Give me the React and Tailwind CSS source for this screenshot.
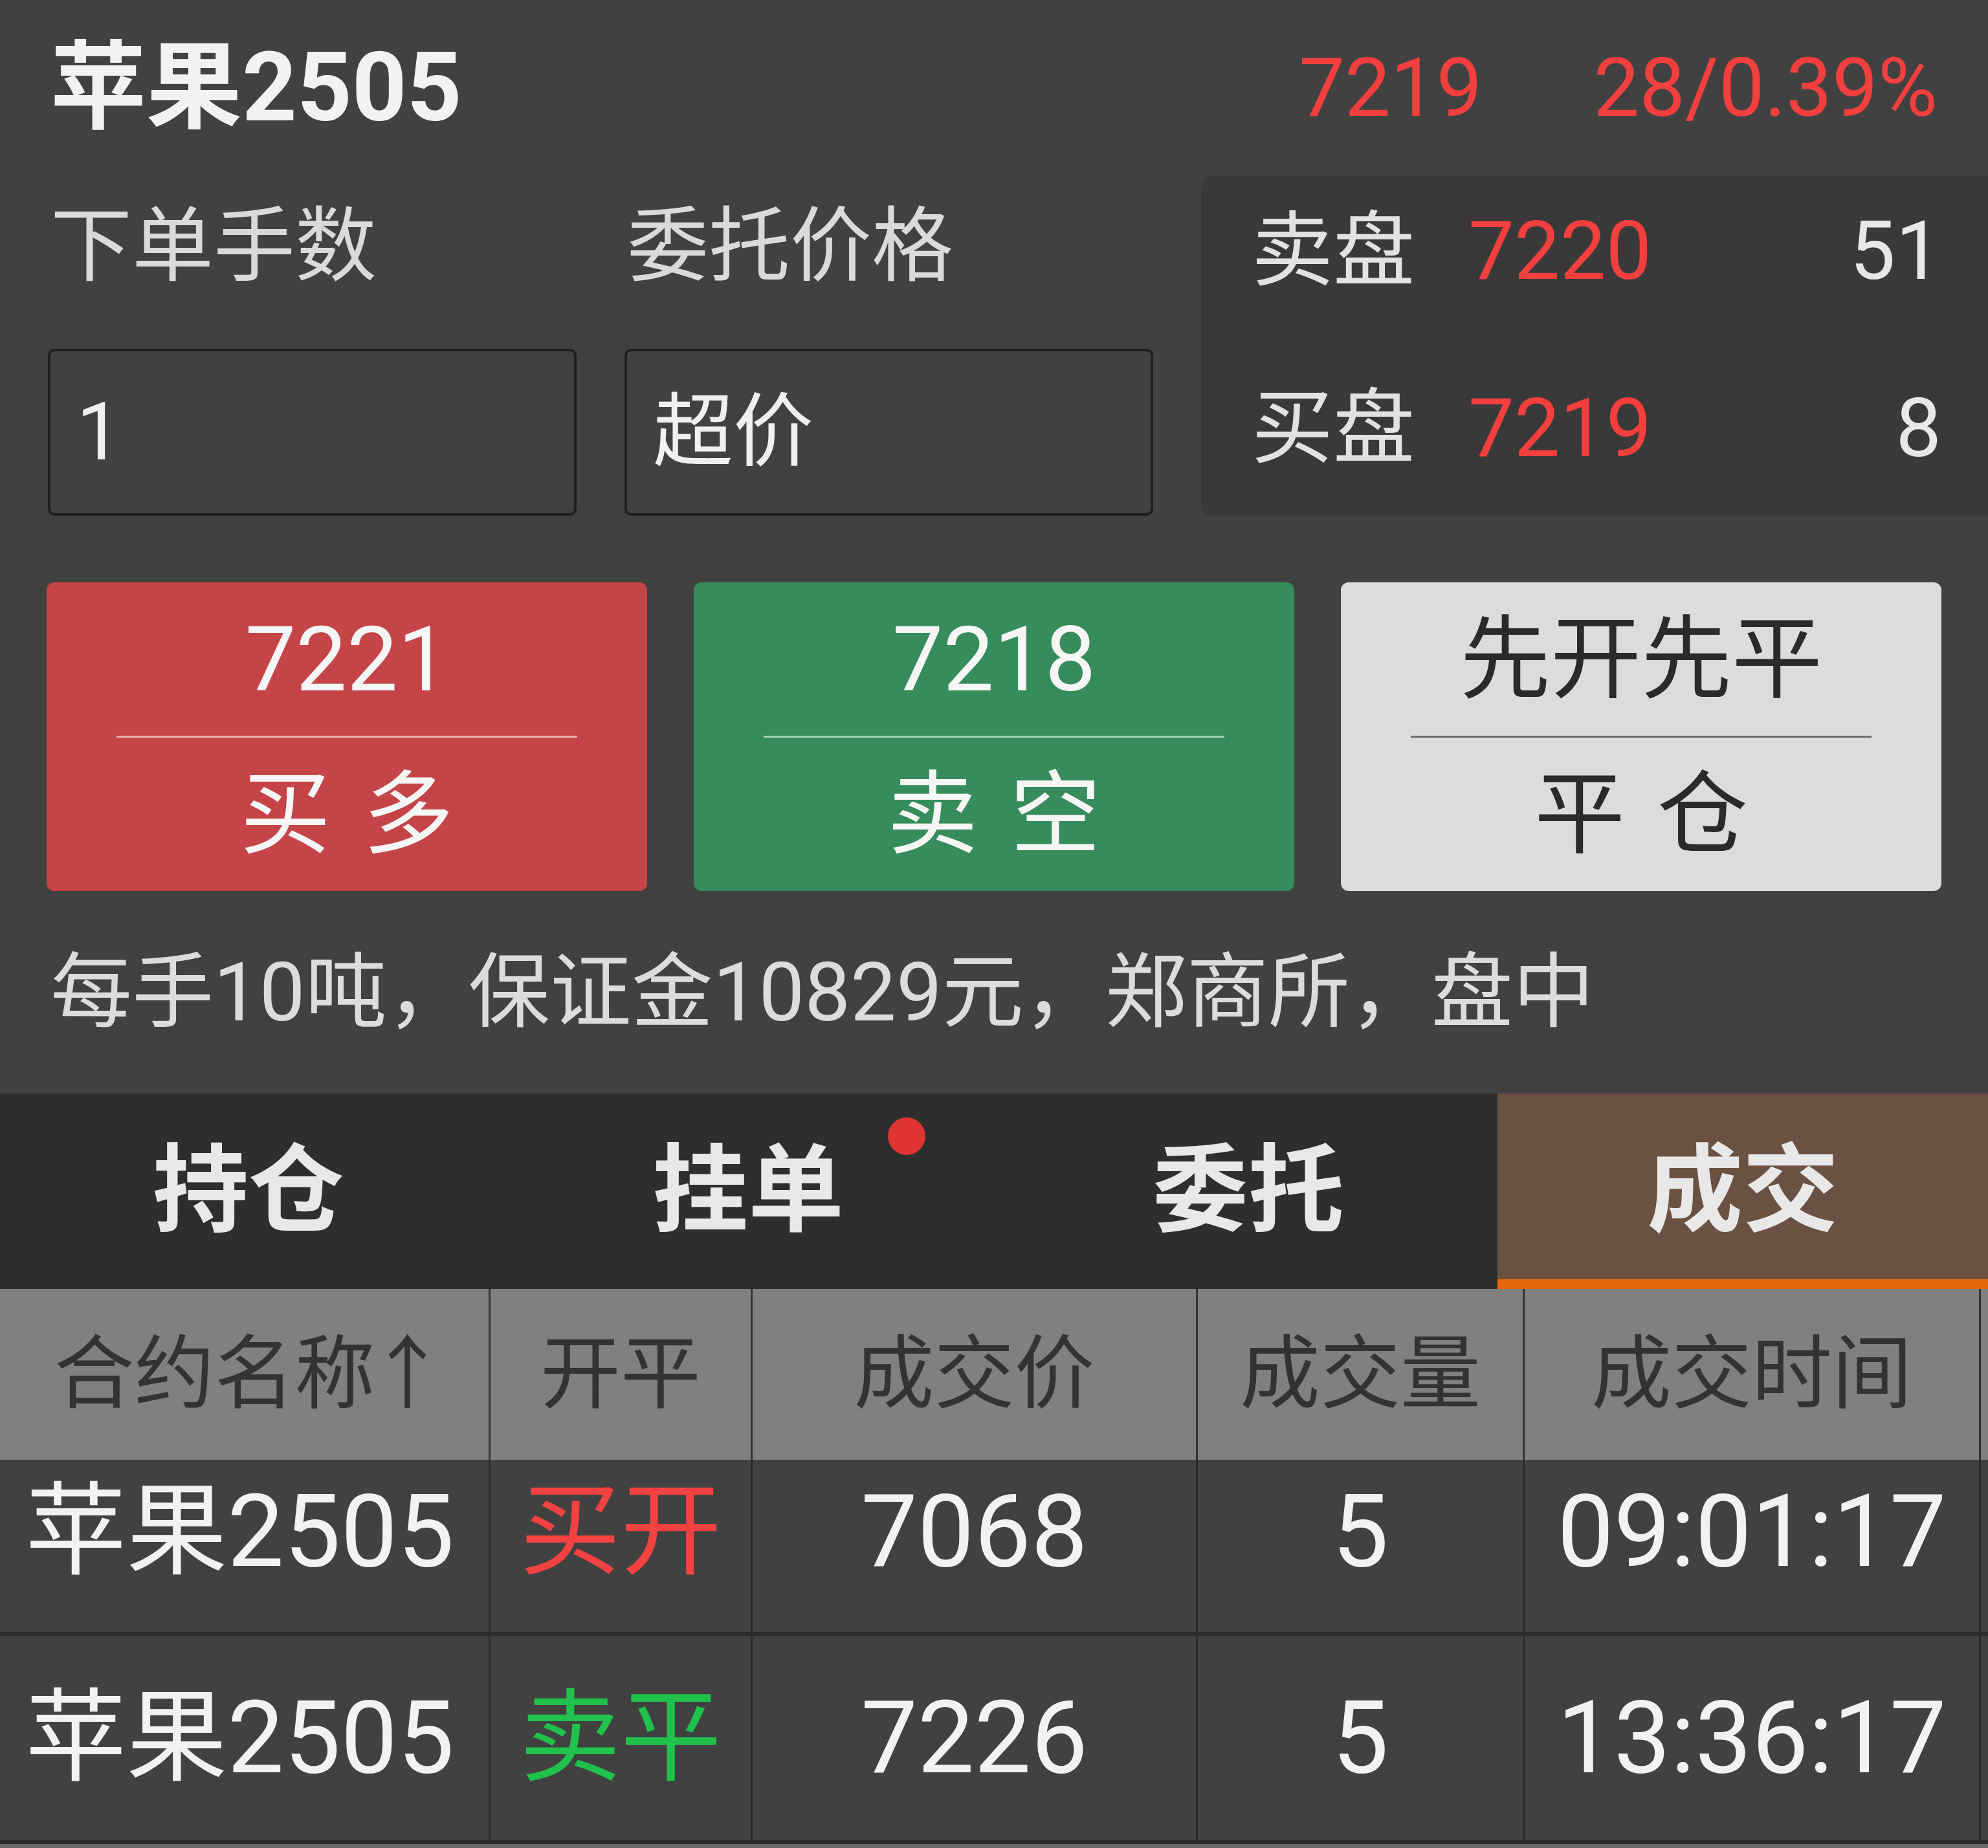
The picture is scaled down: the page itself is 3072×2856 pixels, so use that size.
const cols = "grid grid-cols-[758px_405px_688px_505px_705px_1fr]";

const trades = [
  { name: "苹果2505", side: "买开", sideColor: "text-[#f44242]", price: "7068", qty: "5", time: "09:01:17" },
  { name: "苹果2505", side: "卖平", sideColor: "text-[#20c24c]", price: "7226", qty: "5", time: "13:36:17" },
];

function Field({ label, value }) {
  return (
    <div className="w-[817px] flex flex-col">
      <div className="h-[218px] flex items-center pl-[4px] text-[126px] leading-none text-[#dadada]">{label}</div>
      <div className="mt-[49px] h-[258px] rounded-[10px] border-4 border-[#1f1f1f] flex items-center pl-[40px] text-[124px] leading-none text-[#f0f0f0]">
        {value}
      </div>
    </div>
  );
}

function BookRow({ side, price, vol }) {
  return (
    <div className="h-[150px] flex items-center text-[126px] leading-none">
      <span className="w-[335px] text-[#e2e2e2]">{side}</span>
      <span className="text-[#f43f3f]">{price}</span>
      <span className="ml-auto text-[#e8e8e8]">{vol}</span>
    </div>
  );
}

function ActionButton({ top, bottom, className, line, text }) {
  return (
    <div className={`h-[477px] rounded-[12px] flex flex-col ${className} ${text}`}>
      <div className="flex-1 flex items-center justify-center text-[140px] leading-none">{top}</div>
      <div className={`mx-[108px] h-[3px] ${line}`} />
      <div className="flex-1 flex items-center justify-center gap-[50px] text-[140px] leading-none">
        <span>{bottom[0]}</span>
        <span>{bottom[1]}</span>
      </div>
    </div>
  );
}

export default function App() {
  return (
    <div className="w-[3072px] h-[2856px] overflow-hidden bg-[#414141] font-[Roboto,'Noto_Sans_CJK_SC',sans-serif] text-[#f0f0f0]">
      {/* title */}
      <div className="h-[272px] flex items-center px-[78px]">
        <div className="text-[148px] font-bold leading-none text-[#f2f2f2]">苹果2505</div>
        <div className="ml-auto flex items-center text-[126px] leading-none text-[#f43f3f]">
          <span>7219</span>
          <span className="ml-[172px]">28/0.39%</span>
        </div>
      </div>

      {/* order inputs + quote */}
      <div className="flex gap-[74px] pl-[74px]">
        <Field label="下单手数" value="1" />
        <Field label="委托价格" value="超价" />
        <div className="flex-1 h-[526px] rounded-l-[16px] bg-[#393939] pt-[41px] pl-[78px] pr-[72px] flex flex-col gap-[124px]">
          <BookRow side="卖盘" price="7220" vol="51" />
          <BookRow side="买盘" price="7219" vol="8" />
        </div>
      </div>

      {/* buttons */}
      <div className="grid grid-cols-3 gap-[72px] px-[72px] mt-[102px]">
        <ActionButton top="7221" bottom={["买", "多"]} className="bg-[#c44447]" line="bg-[#eab4b4]" text="text-[#f6f6f6]" />
        <ActionButton top="7218" bottom={["卖", "空"]} className="bg-[#368c5a]" line="bg-[#a9d2b9]" text="text-[#f6f6f6]" />
        <ActionButton top="先开先平" bottom={["平", "仓"]} className="bg-[#dcdcdc]" line="bg-[#6a6a6a]" text="text-[#2a2a2a]" />
      </div>

      <div className="h-[313px] flex items-center pl-[78px] text-[126px] leading-none text-[#dcdcdc]">
        每手10吨，保证金10829元，郑商所，盘中
      </div>

      {/* tabs */}
      <div className="h-[302px] grid grid-cols-[768px_776px_770px_1fr] bg-[#2e2e2e] text-[148px] font-bold leading-none text-[#e8e8e8]">
        <div className="flex items-center justify-center">持仓</div>
        <div className="relative flex items-center justify-center">
          挂单
          <span className="absolute left-[604px] top-[37px] w-[58px] h-[58px] rounded-full bg-[#e03434]" />
        </div>
        <div className="flex items-center justify-center">委托</div>
        <div className="flex items-center justify-center bg-[#6b5141] shadow-[inset_0_-15px_0_#e8670c]">成交</div>
      </div>

      {/* table header */}
      <div className={`${cols} h-[264px] bg-[#808080] text-[124px] leading-none text-[#333333]`}>
        <div className="flex items-center justify-center pl-[20px] border-r-[3px] border-[#333333]">
          合约名称<span className="-ml-[12px]">↑</span>
        </div>
        {["开平", "成交价", "成交量", "成交时间"].map((h) => (
          <div key={h} className="flex items-center justify-center border-r-[3px] border-[#333333]">{h}</div>
        ))}
        <div />
      </div>

      {/* rows */}
      {trades.map((t, i) => (
        <div
          key={t.time}
          className={`${cols} border-b-[6px] border-[#2b2b2b] text-[156px] leading-none text-[#f2f2f2] ${i === 0 ? "h-[272px]" : "h-[322px]"}`}
        >
          {[t.name, t.side, t.price, t.qty, t.time].map((v, j) => (
            <div
              key={j}
              className={`flex items-center justify-center border-r-[3px] border-[#2b2b2b] ${i === 0 ? "pb-[44px]" : ""} ${j === 0 ? "pr-[14px]" : ""} ${j === 1 ? t.sideColor : ""}`}
            >
              {v}
            </div>
          ))}
          <div />
        </div>
      ))}
      <div className="h-[20px] bg-[#6a6a6a]" />
    </div>
  );
}
